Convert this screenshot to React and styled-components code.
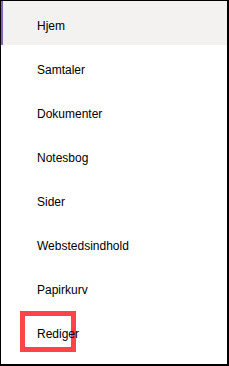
import React from "react";
import styled, { createGlobalStyle } from "styled-components";

const Global = createGlobalStyle`
  html, body { margin: 0; padding: 0; background: #fff; }
  body { font-family: "Liberation Sans", Arial, sans-serif; }
`;

const Frame = styled.nav`
  box-sizing: border-box;
  width: 229px;
  height: 366px;
  border-top: 1px solid #000;
  border-left: 1px solid #000;
  border-right: 2px solid #000;
  border-bottom: 2px solid #000;
  background: #fff;
  display: flex;
  flex-direction: column;
`;

const Item = styled.div`
  position: relative;
  box-sizing: border-box;
  height: 44px;
  flex: none;
  display: flex;
  align-items: center;
  padding-left: ${(p) => (p.$active ? "34px" : "36px")};
  padding-top: 6px;
  background: ${(p) => (p.$active ? "#f3f2f1" : "transparent")};
  border-left: ${(p) => (p.$active ? "2px solid #8764b8" : "none")};
  font-size: 12px;
  color: #000;
`;

const Label = styled.span`
  position: relative;
  z-index: 1;
`;

const Highlight = styled.span`
  position: absolute;
  left: 19px;
  top: 2px;
  width: 56px;
  height: 41px;
  box-sizing: border-box;
  border: 5px solid #ff4448;
`;

const items = [
  "Hjem",
  "Samtaler",
  "Dokumenter",
  "Notesbog",
  "Sider",
  "Webstedsindhold",
  "Papirkurv",
  "Rediger",
];

export default function App() {
  return (
    <>
      <Global />
      <Frame>
        {items.map((t, i) => (
          <Item key={t} $active={i === 0}>
            {t === "Rediger" && <Highlight />}
            <Label>{t}</Label>
          </Item>
        ))}
      </Frame>
    </>
  );
}
